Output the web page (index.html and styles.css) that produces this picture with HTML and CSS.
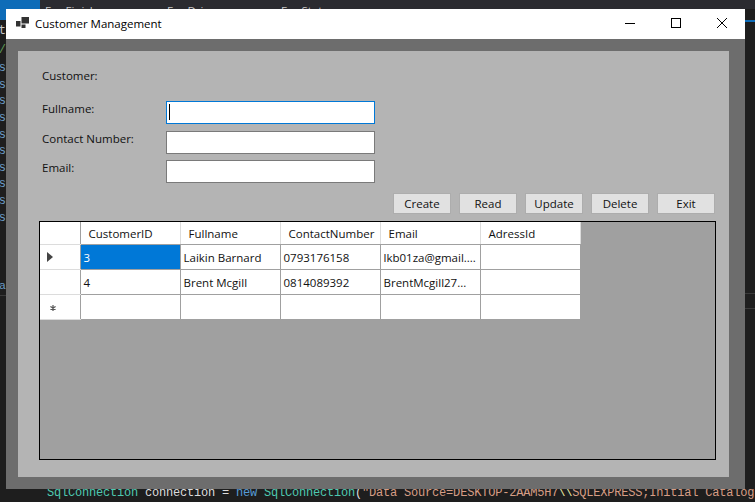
FILE: index.html
```html
<!DOCTYPE html>
<html lang="en-US">
<head>
<meta charset="utf-8">
<title>Customer Management</title>
<link rel="stylesheet" href="styles.css">
</head>
<body>

<!-- editor behind the window -->
<div class="ide">
	<div class="tabs">
		<div class="tab-active"></div>
		<span class="tab tab-1">For Finish</span>
		<span class="tab tab-2">For Drive</span>
		<span class="tab tab-3">For State</span>
	</div>
	<div class="gutter">
		<div class="accent"></div>
		<div class="g-line g-white">t</div>
		<div class="g-line g-green">/</div>
		<div class="g-line g-first">s</div>
		<div class="g-line">s</div>
		<div class="g-line">s</div>
		<div class="g-line">s</div>
		<div class="g-line">s</div>
		<div class="g-line">s</div>
		<div class="g-line">s</div>
		<div class="g-line">s</div>
		<div class="g-line">s</div>
		<div class="g-line">s</div>
	</div>
	<div class="gutter-low">a</div>
	<div class="code-line"><span class="c-type">SqlConnection</span> connection = <span class="c-key">new</span> <span class="c-type">SqlConnection</span>(<span class="c-str">"Data Source=DESKTOP-2AAM5H7</span><span class="c-esc">\\</span><span class="c-str">SQLEXPRESS;Initial Catalog</span></div>
</div>
<div class="side-tick"></div>
<div class="side-rule side-rule-1"></div>
<div class="side-rule side-rule-2"></div>

<div class="window">
	<div class="titlebar">
		<svg class="app-icon" width="13" height="11" viewBox="0 0 13 11">
			<rect x="0" y="4" width="4.5" height="5.5" fill="#333"/>
			<rect x="5.5" y="0" width="7.5" height="6.5" fill="#333"/>
			<rect x="5.5" y="7.5" width="4" height="3.5" fill="#333"/>
		</svg>
		<span class="title">Customer Management</span>
		<div class="win-btn">
			<svg width="10" height="10" viewBox="0 0 10 10"><path d="M0 5.5H10" stroke="#000" fill="none"/></svg>
		</div>
		<div class="win-btn">
			<svg width="10" height="10" viewBox="0 0 10 10"><rect x="0.5" y="0.5" width="9" height="9" stroke="#000" fill="none"/></svg>
		</div>
		<div class="win-btn">
			<svg width="10" height="10" viewBox="0 0 10 10"><path d="M0 0L10 10M10 0L0 10" stroke="#000" fill="none"/></svg>
		</div>
	</div>

	<div class="frame">
		<div class="panel">
			<div class="heading">Customer:</div>

			<form class="fields">
				<label class="lbl" for="fullname">Fullname:</label>
				<div class="field field-focus"><input id="fullname" type="text"></div>
				<label class="lbl" for="contact">Contact Number:</label>
				<div class="field"><input id="contact" type="text"></div>
				<label class="lbl" for="email">Email:</label>
				<div class="field"><input id="email" type="text"></div>
			</form>

			<div class="actions">
				<button type="button">Create</button>
				<button type="button">Read</button>
				<button type="button">Update</button>
				<button type="button">Delete</button>
				<button type="button">Exit</button>
			</div>

			<div class="grid-box">
				<table class="grid">
					<thead>
						<tr>
							<th class="rowhead"></th>
							<th>CustomerID</th>
							<th>Fullname</th>
							<th>ContactNumber</th>
							<th>Email</th>
							<th>AdressId</th>
						</tr>
					</thead>
					<tbody>
						<tr>
							<td class="rowhead">
								<svg class="row-glyph" width="6" height="10" viewBox="0 0 6 10"><path d="M0 0L6 5L0 10Z" fill="#444"/></svg>
							</td>
							<td class="selected">3</td>
							<td>Laikin Barnard</td>
							<td>0793176158</td>
							<td>lkb01za@gmail....</td>
							<td></td>
						</tr>
						<tr>
							<td class="rowhead"></td>
							<td>4</td>
							<td>Brent Mcgill</td>
							<td>0814089392</td>
							<td>BrentMcgill27...</td>
							<td></td>
						</tr>
						<tr>
							<td class="rowhead">
								<svg class="row-glyph row-star" width="6" height="6" viewBox="0 0 6 6"><path d="M3 0V6M0.4 1.5L5.6 4.5M5.6 1.5L0.4 4.5" stroke="#555" stroke-width="1.2" fill="none"/></svg>
							</td>
							<td></td>
							<td></td>
							<td></td>
							<td></td>
							<td></td>
						</tr>
					</tbody>
				</table>
			</div>
		</div>
	</div>
</div>

</body>
</html>
```

FILE: styles.css
```css
html, body {
    margin: 0;
    height: 100%;
}
body {
    background-color: #1e1e1e;
    overflow: hidden;
    font-family: "Open Sans", "Noto Sans", sans-serif;
    font-size: 11.5px;
    color: #111;
}

/* the editor behind */
.ide {
    height: 502px;
    display: flex;
    flex-direction: column;
}
.tabs {
    height: 9px;
    background-color: #2b2b30;
    overflow: hidden;
    display: flex;
    color: #c8c8c8;
    line-height: 22px;
    flex-shrink: 0;
}
.tab-active {
    width: 40px;
    height: 9px;
    background-color: #0e6cb8;
}
.tab-1 { margin-left: 5px; width: 122px; }
.tab-2 { width: 114px; }
.gutter {
    width: 6px;
    overflow: hidden;
    background-color: #1e1e1e;
    color: #6c9bc4;
    font-family: "Liberation Mono", monospace;
    font-size: 12px;
}
.accent {
    height: 11px;
    background-color: #0e6cb8;
}
.g-line {
    height: 16.6px;
    line-height: 16.6px;
    direction: rtl;
    width: 6px;
}
.g-white { color: #c8c8c8; margin-top: 3px; }
.g-green { color: #5f9a55; margin-top: 2px; }
.g-first { margin-top: 2px; }
.gutter-low {
    width: 6px;
    overflow: hidden;
    margin-top: 53px;
    color: #6c9bc4;
    font-family: "Liberation Mono", monospace;
    direction: rtl;
    height: 16px;
    border-bottom: 1px solid #3a3a3a;
}
.code-line {
    margin-top: auto;
    padding-left: 47px;
    height: 18px;
    line-height: 18px;
    white-space: nowrap;
    font-family: "Liberation Mono", monospace;
    font-size: 12px;
    letter-spacing: -0.2px;
    color: #dcdcdc;
}
.c-type { color: #4ec9b0; }
.c-key { color: #569cd6; }
.c-str { color: #d69d85; }
.c-esc { color: #e8e8a0; }

.side-tick {
    position: absolute;
    left: 745px;
    top: 20px;
    width: 10px;
    height: 2px;
    background-color: #0e6cb8;
}
.side-rule {
    position: absolute;
    left: 745px;
    width: 10px;
    height: 1px;
    background-color: #3a3a3a;
}
.side-rule-1 { top: 293px; }
.side-rule-2 { top: 308px; }

/* the window, floating on the desktop */
.window {
    position: absolute;
    left: 6px;
    top: 9px;
    width: 739px;
}
.titlebar {
    height: 30px;
    background-color: #fff;
    display: flex;
    align-items: center;
    color: #000;
}
.app-icon {
    margin-left: 10px;
    margin-bottom: 3px;
}
.title {
    margin-left: 6px;
    margin-bottom: 2px;
    flex: 1;
}
.win-btn {
    width: 46px;
    height: 30px;
    display: flex;
    align-items: center;
    justify-content: center;
}
.win-btn svg {
    margin-bottom: 2px;
}
.frame {
    background-color: #6d6d6d;
    padding: 12px 16px 12px 12px;
}
.panel {
    height: 426px;
    box-sizing: border-box;
    background-color: #b4b4b4;
    padding: 16px 13px 0 21px;
}
.heading {
    margin-left: 3px;
    height: 34px;
    line-height: 18px;
}
.fields {
    margin-left: 3px;
    display: grid;
    grid-template-columns: 124px 209px;
    grid-template-rows: 30px 29px 23px;
}
.lbl {
    line-height: 15px;
}
.field {
    position: relative;
}
.field input {
    display: block;
    width: 209px;
    height: 23px;
    box-sizing: border-box;
    border: 1px solid #7a7a7a;
    background-color: #fff;
    padding: 0 3px;
    margin: 0;
    outline: none;
}
.field-focus input {
    border-color: #0078d7;
}
/* text caret */
.field-focus::after {
    content: "";
    position: absolute;
    left: 3px;
    top: 3px;
    width: 1px;
    height: 16px;
    background-color: #000;
}
.actions {
    display: flex;
    justify-content: flex-end;
    gap: 8px;
    margin-top: 10px;
    margin-right: 1px;
}
.actions button {
    width: 58px;
    height: 21px;
    box-sizing: border-box;
    border: 1px solid #adadad;
    padding: 0;
    background-color: #e1e1e1;
    font-family: inherit;
    font-size: 11.5px;
    color: #111;
}
.grid-box {
    margin-top: 7px;
    height: 239px;
    box-sizing: border-box;
    border: 1px solid #000;
    background-color: #a0a0a0;
}
.grid {
    border-collapse: collapse;
    table-layout: fixed;
    width: 540px;
}
.grid th {
    width: 100px;
    height: 22px;
    padding: 1px 0 0 8px;
    box-sizing: border-box;
    background-color: #fff;
    font-weight: normal;
    text-align: left;
    border-right: 1px solid #dcdcdc;
    border-bottom: 1px solid #a0a0a0;
}
.grid td {
    height: 25px;
    padding: 1px 3px 0;
    box-sizing: border-box;
    background-color: #fff;
    white-space: nowrap;
    overflow: hidden;
    border-right: 1px solid #a0a0a0;
    border-bottom: 1px solid #a0a0a0;
}
.grid .rowhead {
    width: 40px;
    padding: 0 0 0 7px;
    border-right: 1px solid #a0a0a0;
    border-bottom-color: #dcdcdc;
}
.grid td.selected {
    background-color: #0078d7;
    color: #fff;
}
.row-glyph {
    display: block;
}
.row-star {
    margin: 3px 0 0 3px;
}
```
